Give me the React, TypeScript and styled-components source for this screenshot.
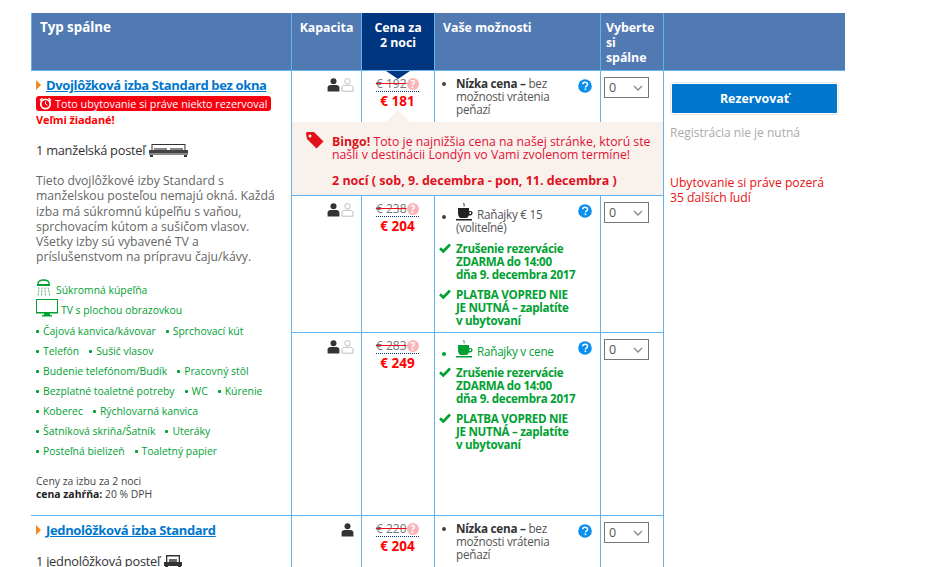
import React from "react";
import styled, { createGlobalStyle } from "styled-components";

const Global = createGlobalStyle`
  html, body { margin: 0; padding: 0; background: #fff; overflow: hidden; }
  body { font-family: "Open Sans", "Noto Sans", "Liberation Sans", sans-serif; color: #333; }
  #root { height: 567px; overflow: hidden; }
`;

const Page = styled.div`
  padding: 13px 0 0 31px;
`;
const Table = styled.table`
  width: 814px;
  table-layout: fixed;
  border-collapse: separate;
  border-spacing: 0;
  font-size: 12px;
`;
const Line = "#62b2f0";
const Head = styled.th<{ $dark?: boolean; $first?: boolean; $last?: boolean; $center?: boolean; $pl?: number }>`
  height: 50px;
  padding: 7px ${(p) => (p.$center ? "0" : "4px")} 0 ${(p) => (p.$center ? 0 : p.$pl ?? 8)}px;
  vertical-align: top;
  text-align: ${(p) => (p.$center ? "center" : "left")};
  background: ${(p) => (p.$dark ? "#003580" : "#527ab2")};
  color: #fff;
  font-size: ${(p) => (p.$first ? "13.4px" : "12.4px")};
  line-height: 15px;
  font-weight: 700;
  letter-spacing: -0.05px;
  border-right: ${(p) => (p.$last ? "none" : `1px solid ${Line}`)};
  border-bottom: 1px solid ${Line};
  border-left: ${(p) => (p.$first ? `1px solid ${Line}` : "none")};
  position: relative;
`;
const DownNotch = styled.span`
  position: absolute;
  left: 24px;
  bottom: -9px;
  width: 0;
  height: 0;
  border-left: 12px solid transparent;
  border-right: 12px solid transparent;
  border-top: 8px solid #003580;
  z-index: 2;
`;
const Cell = styled.td<{ $h?: number; $flush?: boolean }>`
  padding: 0;
  vertical-align: top;
  border-right: 1px solid ${Line};
  border-bottom: ${(p) => (p.$flush ? "none" : `1px solid ${Line}`)};
  height: ${(p) => (p.$h ? `${p.$h}px` : "auto")};
  position: relative;
`;
const RoomCell = styled(Cell)`
  padding: 5px 6px 0 5px;
`;
const SideCell = styled.td`
  padding: 11px 6px 0 6px;
  vertical-align: top;
`;
const RoomTitle = styled.div`
  display: flex;
  align-items: center;
  gap: 5px;
  height: 18px;
`;
const Caret = styled.span`
  width: 0;
  height: 0;
  border-top: 5px solid transparent;
  border-bottom: 5px solid transparent;
  border-left: 5px solid #f08a1d;
`;
const RoomLink = styled.a`
  color: #0077cc;
  font-weight: 700;
  font-size: 13px;
  letter-spacing: -0.36px;
  line-height: 16px;
  text-decoration: underline;
`;
const Alert = styled.div`
  display: flex;
  width: fit-content;
  align-items: center;
  gap: 3px;
  background: #f8000f;
  color: #fff;
  border-radius: 3px;
  height: 15px;
  padding: 0 4px 0 3px;
  margin-top: 2px;
  font-size: 10.8px;
  white-space: nowrap;
`;
const Hot = styled.div`
  color: #f00;
  font-weight: 700;
  font-size: 11px;
  letter-spacing: -0.1px;
  line-height: 15px;
  margin-top: 1px;
`;
const BedLine = styled.div<{ $mt: number }>`
  display: flex;
  align-items: center;
  gap: 4px;
  font-size: 12.8px;
  letter-spacing: -0.25px;
  line-height: 20px;
  margin-top: ${(p) => p.$mt}px;
  color: #333;
`;
const Desc = styled.p`
  margin: 13px 0 0;
  color: #666;
  font-size: 12.2px;
  line-height: 15.3px;
`;
const Features = styled.div`
  margin-top: 15px;
  color: #00a132;
  font-size: 10.4px;
`;
const FeatureRow = styled.div<{ $h?: number }>`
  display: flex;
  align-items: center;
  gap: 3px;
  height: ${(p) => p.$h ?? 20}px;
  svg { margin-bottom: 4px; }
`;
const Feature = styled.span`
  margin-right: 7px;
  white-space: nowrap;
  &::before {
    content: "";
    display: inline-block;
    width: 3px;
    height: 3px;
    background: #00a132;
    vertical-align: 2px;
    margin-right: 4px;
    border-radius: 1px;
  }
`;
const Tax = styled.div`
  margin-top: 14px;
  font-size: 10.4px;
  line-height: 13px;
  color: #444;
  b { color: #222; }
`;
const Persons = styled.div`
  display: flex;
  justify-content: flex-end;
  gap: 1px;
  padding: 7px 7px 0 0;
`;
const PriceBox = styled.div`
  width: 43px;
  margin: 6px 0 0 14px;
`;
const OldRow = styled.div`
  position: relative;
  height: 14px;
  border-bottom: 1px dotted #003580;
  color: #777;
  font-size: 12px;
  line-height: 14px;
  white-space: nowrap;
`;
const OldText = styled.span`
  text-decoration: line-through;
  text-decoration-color: #e8101c;
  text-decoration-thickness: 1.4px;
  margin-right: 2px;
`;
const HintDot = styled.span`
  position: absolute;
  right: 0;
  top: 1px;
  width: 12px;
  height: 12px;
  border-radius: 50%;
  background: #fbb4b8;
  color: #fff;
  font-size: 10px;
  line-height: 12px;
  font-weight: 700;
  text-align: center;
`;
const NewPrice = styled.div`
  color: #f00;
  font-weight: 700;
  font-size: 13.5px;
  line-height: 18px;
  text-align: center;
`;
const Options = styled.div<{ $top?: number }>`
  position: relative;
  padding: ${(p) => p.$top ?? 6}px 4px 0 4px;
`;
const Help = styled.span`
  position: absolute;
  right: 8px;
  top: 8px;
  display: flex;
`;
const Bullet = styled.div<{ $green?: boolean; $dot?: number }>`
  position: relative;
  padding-left: 17px;
  font-size: 11.7px;
  letter-spacing: -0.25px;
  line-height: 13px;
  color: ${(p) => (p.$green ? "#00a132" : "#555")};
  b { color: #333; }
  &::before {
    content: "";
    position: absolute;
    left: 3px;
    top: ${(p) => p.$dot ?? 5}px;
    width: 4px;
    height: 4px;
    border-radius: 50%;
    background: ${(p) => (p.$green ? "#00a132" : "#444")};
  }
`;
const Meal = styled.div`
  display: flex;
  align-items: flex-end;
  gap: 4px;
`;
const CheckRow = styled.div<{ $top?: number }>`
  display: flex;
  gap: 5px;
  margin-top: ${(p) => p.$top ?? 7}px;
  color: #00a132;
  font-weight: 700;
  font-size: 11.6px;
  letter-spacing: -0.3px;
  line-height: 13px;
  svg { flex: none; margin-top: 1px; }
`;
const SelectWrap = styled.div`
  padding: 6px 0 0 3px;
`;
const Picker = styled.select`
  display: block;
  appearance: none;
  width: 45px;
  height: 21px;
  border: 1px solid #767676;
  border-radius: 0;
  background: #fff url("data:image/svg+xml,%3Csvg xmlns='http://www.w3.org/2000/svg' width='10' height='6'%3E%3Cpath d='M1 1l4 4 4-4' fill='none' stroke='%23888' stroke-width='1.3'/%3E%3C/svg%3E") no-repeat right 5px center;
  color: #555;
  font-family: inherit;
  font-size: 12.5px;
  padding: 0 0 0 4px;
`;
const ReserveFrame = styled.div`
  width: 165px;
  padding: 1px;
  border: 1px solid #e6e6e6;
  border-radius: 3px;
`;
const Reserve = styled.button`
  display: block;
  width: 100%;
  height: 29px;
  border: none;
  border-radius: 1px;
  background: #0077cc;
  color: #fff;
  font-family: inherit;
  font-weight: 700;
  font-size: 12.4px;
`;
const NoReg = styled.div`
  margin-top: 10px;
  color: #aaa;
  font-size: 12px;
  line-height: 16px;
`;
const Watching = styled.div`
  margin-top: 34px;
  color: #e81010;
  font-size: 12.2px;
  line-height: 15px;
`;
const Bingo = styled.td`
  position: relative;
  background: #f9f2ec;
  border-right: 1px solid ${Line};
  border-bottom: 1px solid ${Line};
  padding: 13px 10px 0 40px;
  height: 60px;
  vertical-align: top;
  font-size: 12.3px;
  line-height: 13px;
  color: #e31035;
`;
const UpNotch = styled.span`
  position: absolute;
  left: 94px;
  top: -12px;
  width: 0;
  height: 0;
  border-left: 12px solid transparent;
  border-right: 12px solid transparent;
  border-bottom: 12px solid #f9f2ec;
`;
const BingoTag = styled.span`
  position: absolute;
  left: 14px;
  top: 10px;
  display: flex;
`;
const BingoTitle = styled.b`
  color: #d9121c;
`;
const BingoDates = styled.div`
  margin-top: 13px;
  font-weight: 700;
  font-size: 12.5px;
  color: #e01020;
`;

const Person = ({ solid = true }: { solid?: boolean }) => (
  <svg width="13" height="14" viewBox="0 0 13 14">
    {solid ? (
      <g fill="#333">
        <circle cx="6.5" cy="3.2" r="3" />
        <path d="M.6 13.5V9.6C.6 8 2 7 3.5 7h6c1.5 0 2.9 1 2.9 2.6v3.9z" />
      </g>
    ) : (
      <g fill="none" stroke="#aab0b5" strokeWidth="0.8">
        <circle cx="6.5" cy="3.2" r="2.7" />
        <path d="M1 13.2V9.6C1 8.2 2.2 7.4 3.5 7.400h6c1.300 0 2.500.8 2.500 2.200v3.600z" />
      </g>
    )}
  </svg>
);
const Help2 = () => (
  <svg width="14" height="14" viewBox="0 0 14 14">
    <circle cx="7" cy="7" r="6.8" fill="#0a8ef0" />
    <path d="M4.700 5.300C4.800 3.900 5.800 3.200 7.100 3.200c1.400 0 2.400.8 2.400 2 0 1-.6 1.500-1.300 2-.5.3-.7.6-.7 1.200" fill="none" stroke="#fff" strokeWidth="1.500" />
    <rect x="6.600" y="9.500" width="1.600" height="1.600" fill="#fff" />
  </svg>
);
const Check = () => (
  <svg width="12" height="10" viewBox="0 0 12 10">
    <path d="M1 5.300l3.300 3.200L11 1.500" fill="none" stroke="#00a132" strokeWidth="2.600" />
  </svg>
);
const Cup = ({ color }: { color: string }) => (
  <svg width="17" height="18" viewBox="0 0 17 18">
    <path d="M8 0c-1 1.200 1 2 0 3.500" fill="none" stroke={color} strokeWidth="1" />
    <path d="M2 5h11v3h1.500C16 8 16.600 9 16.600 10s-1 2.500-2.600 2.500h-1.300C12 14.500 11 15 10 15H5C3.500 15 2 13 2 10z" fill={color} />
    <rect x="0" y="16" width="16" height="1.500" fill={color} />
    <rect x="13.500" y="9" width="1.500" height="2" fill="#fff" />
  </svg>
);
const DoubleBed = () => (
  <svg width="39" height="14" viewBox="0 0 39 14">
    <path d="M2.500 1h34v6h-1V2h-32v5h-1z" fill="#333" />
    <path d="M0 7h39v3H0z" fill="#444" />
    <path d="M0 10h39v2H0z" fill="#888" />
    <path d="M1 12h3v2H1zM35 12h3v2h-3z" fill="#333" />
    <path d="M5 5h13v2H5zM21 5h13v2H21z" fill="#888" />
  </svg>
);
const SingleBed = () => (
  <svg width="18" height="15" viewBox="0 0 18 15">
    <path d="M2 1h14v7h-1.300V2.400H3.300V8H2z" fill="#333" />
    <path d="M5 5h8v3H5z" fill="#666" />
    <path d="M0 8h18v4H0z" fill="#333" />
    <path d="M1 12h3v2.500H1zM14 12h3v2.500h-3z" fill="#333" />
  </svg>
);
const Shower = () => (
  <svg width="17" height="18" viewBox="0 0 17 18">
    <path d="M2 7V4.500C2 2 4.500 1 7.500 1s5.500 1 5.500 3.500V7" fill="none" stroke="#00a132" strokeWidth="1.300" />
    <rect x="1" y="5" width="13" height="2" fill="#00a132" />
    <path d="M3 8.500L2 17M6 8.500L5.600 17M9 8.500L9.400 17M12 8.500L14 17" stroke="#2f8a55" strokeWidth="0.800" strokeDasharray="2 1" />
  </svg>
);
const Tv = () => (
  <svg width="22" height="18" viewBox="0 0 22 18">
    <rect x="0.500" y="0.500" width="21" height="13" fill="none" stroke="#00a132" />
    <path d="M0 13h22v1.500H0zM8 14.500h6V16H8zM6 16h10v1.500H6z" fill="#00a132" />
  </svg>
);
const Clock = () => (
  <svg width="13" height="13" viewBox="0 0 13 13">
    <circle cx="6.500" cy="7" r="4.700" fill="none" stroke="#fff" strokeWidth="1.800" />
    <path d="M6.500 4.500V7l2 1.200" fill="none" stroke="#fff" />
    <path d="M.5 3L3 .8l1 1L1.500 4zM12.500 3L10 .8l-1 1L11.500 4z" fill="#fff" />
  </svg>
);
const Tag = () => (
  <svg width="18" height="17" viewBox="0 0 18 17">
    <path d="M0 1.500C0 .6.600 0 1.500 0H8l9.500 9.500-7 7L1 7z" fill="#e3111b" />
    <circle cx="4" cy="4" r="1.500" fill="#f9f2ec" />
  </svg>
);

const OldPrice = ({ old, now }: { old: string; now: string }) => (
  <PriceBox>
    <OldRow>
      <OldText>€ {old}</OldText>
      <HintDot>?</HintDot>
    </OldRow>
    <NewPrice>€ {now}</NewPrice>
  </PriceBox>
);
const Cap = ({ two = true }: { two?: boolean }) => (
  <Persons>
    <Person />
    {two && <Person solid={false} />}
  </Persons>
);
const Pick = () => (
  <SelectWrap>
    <Picker defaultValue="0">
      <option>0</option>
      <option>1</option>
    </Picker>
  </SelectWrap>
);
const Refund = ({ top = 8 }: { top?: number }) => (
  <>
    <CheckRow $top={top}>
      <Check />
      <span>Zrušenie rezervácie<br />ZDARMA do 14:00<br />dňa 9. decembra 2017</span>
    </CheckRow>
    <CheckRow>
      <Check />
      <span>PLATBA VOPRED NIE<br />JE NUTNÁ – zaplatíte<br />v ubytovaní</span>
    </CheckRow>
  </>
);
const LowPrice = () => (
  <Options>
    <Help><Help2 /></Help>
    <Bullet><b>Nízka cena –</b> bez<br />možnosti vrátenia<br />peňazí</Bullet>
  </Options>
);

const featureRows = [
  ["Čajová kanvica/kávovar", "Sprchovací kút"],
  ["Telefón", "Sušič vlasov"],
  ["Budenie telefónom/Budík", "Pracovný stôl"],
  ["Bezplatné toaletné potreby", "WC", "Kúrenie"],
  ["Koberec", "Rýchlovarná kanvica"],
  ["Šatníková skriňa/Šatník", "Uteráky"],
  ["Posteľná bielizeň", "Toaletný papier"],
];

export default function App() {
  return (
    <Page>
      <Global />
      <Table>
        <colgroup>
          <col width="261" />
          <col width="70" />
          <col width="73" />
          <col width="166" />
          <col width="63" />
          <col width="181" />
        </colgroup>
        <thead>
          <tr>
            <Head $first>Typ spálne</Head>
            <Head $center>Kapacita</Head>
            <Head $dark $center>Cena za<br />2 noci<DownNotch /></Head>
            <Head>Vaše možnosti</Head>
            <Head $pl={5}>Vyberte<br />si<br />spálne</Head>
            <Head $last />
          </tr>
        </thead>
        <tbody>
          <tr>
            <RoomCell rowSpan={4}>
              <RoomTitle>
                <Caret />
                <RoomLink>Dvojlôžková izba Standard bez okna</RoomLink>
              </RoomTitle>
              <Alert><Clock />Toto ubytovanie si práve niekto rezervoval</Alert>
              <Hot>Veľmi žiadané!</Hot>
              <BedLine $mt={13}>1 manželská posteľ <DoubleBed /></BedLine>
              <Desc>
                Tieto dvojlôžkové izby Standard s<br />
                manželskou posteľou nemajú okná. Každá<br />
                izba má súkromnú kúpeľňu s vaňou,<br />
                sprchovacím kútom a sušičom vlasov.<br />
                Všetky izby sú vybavené TV a<br />
                príslušenstvom na prípravu čaju/kávy.
              </Desc>
              <Features>
                <FeatureRow $h={20}><Shower />Súkromná kúpeľňa</FeatureRow>
                <FeatureRow $h={21}><Tv />TV s plochou obrazovkou</FeatureRow>
                {featureRows.map((r) => (
                  <FeatureRow key={r[0]}>
                    {r.map((f) => <Feature key={f}>{f}</Feature>)}
                  </FeatureRow>
                ))}
              </Features>
              <Tax>Ceny za izbu za 2 noci<br /><b>cena zahŕňa:</b> 20 % DPH</Tax>
            </RoomCell>
            <Cell $h={51} $flush><Cap /></Cell>
            <Cell $flush><OldPrice old="192" now="181" /></Cell>
            <Cell $flush><LowPrice /></Cell>
            <Cell $flush><Pick /></Cell>
            <SideCell rowSpan={5}>
              <ReserveFrame><Reserve>Rezervovať</Reserve></ReserveFrame>
              <NoReg>Registrácia nie je nutná</NoReg>
              <Watching>Ubytovanie si práve pozerá<br />35 ďalších ľudí</Watching>
            </SideCell>
          </tr>
          <tr>
            <Bingo colSpan={4}>
              <UpNotch />
              <BingoTag><Tag /></BingoTag>
              <BingoTitle>Bingo!</BingoTitle> Toto je najnižšia cena na našej stránke, ktorú ste<br />
              našli v destinácii Londýn vo Vami zvolenom termíne!
              <BingoDates>2 nocí ( sob, 9. decembra - pon, 11. decembra )</BingoDates>
            </Bingo>
          </tr>
          <tr>
            <Cell $h={136}><Cap /></Cell>
            <Cell><OldPrice old="238" now="204" /></Cell>
            <Cell>
              <Options $top={7}>
                <Help><Help2 /></Help>
                <Bullet $dot={12}>
                  <Meal><Cup color="#222" />Raňajky € 15</Meal>(voliteľné)
                </Bullet>
                <Refund />
              </Options>
            </Cell>
            <Cell><Pick /></Cell>
          </tr>
          <tr>
            <Cell $h={182}><Cap /></Cell>
            <Cell><OldPrice old="283" now="249" /></Cell>
            <Cell>
              <Options $top={7}>
                <Help><Help2 /></Help>
                <Bullet $green $dot={12}>
                  <Meal><Cup color="#00a132" />Raňajky v cene</Meal>
                </Bullet>
                <Refund />
              </Options>
            </Cell>
            <Cell><Pick /></Cell>
          </tr>
          <tr>
            <RoomCell>
              <RoomTitle>
                <Caret />
                <RoomLink>Jednolôžková izba Standard</RoomLink>
              </RoomTitle>
              <BedLine $mt={12}>1 jednolôžková posteľ <SingleBed /></BedLine>
            </RoomCell>
            <Cell $h={100}><Cap two={false} /></Cell>
            <Cell><OldPrice old="220" now="204" /></Cell>
            <Cell><LowPrice /></Cell>
            <Cell><Pick /></Cell>
          </tr>
        </tbody>
      </Table>
    </Page>
  );
}
